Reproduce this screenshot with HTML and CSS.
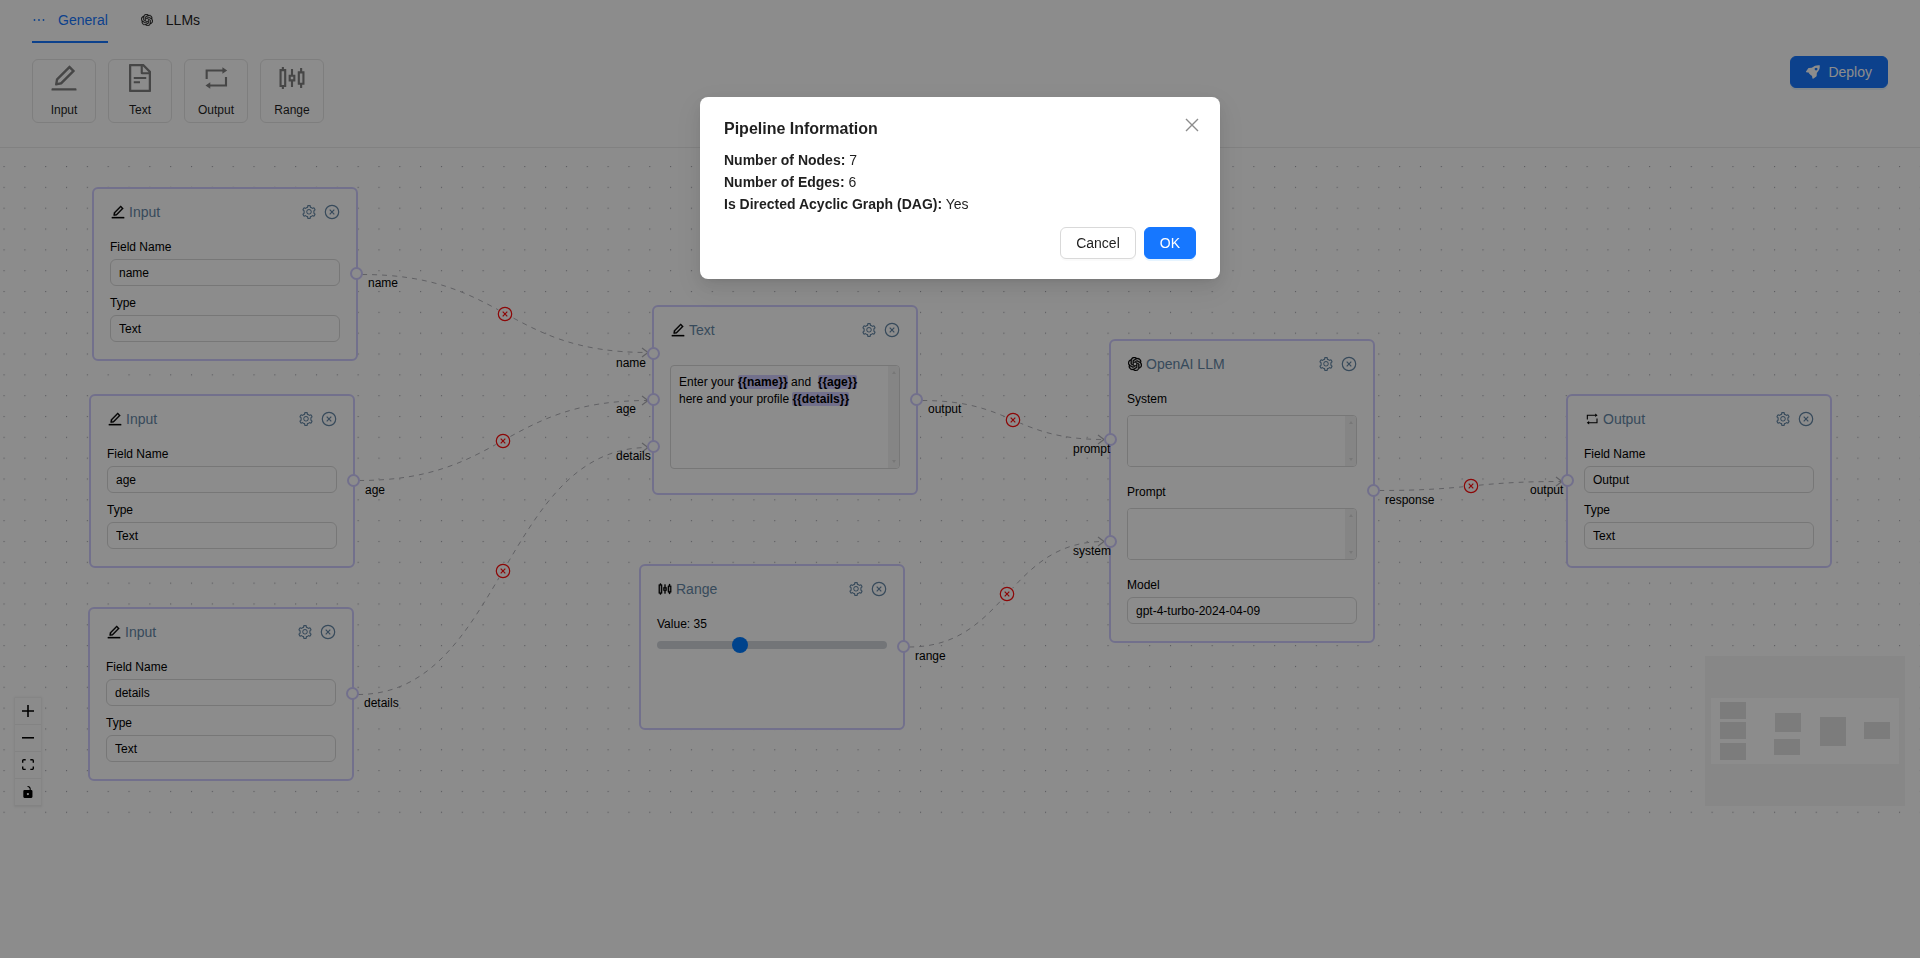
FILE: index.html
```html
<!DOCTYPE html>
<html lang="en">
<head>
<meta charset="utf-8">
<title>Pipeline editor</title>
<link rel="stylesheet" href="styles.css">
</head>
<body>
<svg class="sprite" aria-hidden="true">
  <symbol id="i-edit" viewBox="0 0 1024 1024"><path d="M257.700 752c2 0 4-.2 6-.5L431.900 722c2-.4 3.900-1.300 5.300-2.800l423.900-423.900a9.960 9.960 0 000-14.100L694.900 114.900c-1.900-1.900-4.400-2.900-7.100-2.900s-5.200 1-7.100 2.900L256.800 538.800c-1.500 1.500-2.400 3.300-2.800 5.300l-29.500 168.200a33.500 33.500 0 009.400 29.800c6.600 6.400 14.900 9.900 23.800 9.900zm67.400-174.400L687.800 215l73.300 73.300-362.700 362.600-88.900 15.700 15.600-89zM880 836H144c-17.700 0-32 14.300-32 32v36c0 4.400 3.600 8 8 8h784c4.400 0 8-3.600 8-8v-36c0-17.700-14.300-32-32-32z"/></symbol>
  <symbol id="i-file" viewBox="0 0 1024 1024"><path d="M854.600 288.600L639.400 73.400c-6-6-14.100-9.400-22.600-9.400H192c-17.700 0-32 14.300-32 32v832c0 17.700 14.300 32 32 32h640c17.700 0 32-14.300 32-32V311.300c0-8.500-3.400-16.700-9.400-22.700zM790.200 326H602V137.800L790.200 326zm1.800 562H232V136h302v216a42 42 0 0042 42h216v494zM504 618H320c-4.400 0-8 3.600-8 8v48c0 4.400 3.600 8 8 8h184c4.400 0 8-3.600 8-8v-48c0-4.400-3.600-8-8-8zM312 490v48c0 4.400 3.600 8 8 8h384c4.400 0 8-3.600 8-8v-48c0-4.400-3.600-8-8-8H320c-4.400 0-8 3.600-8 8z"/></symbol>
  <symbol id="i-loop" viewBox="0 0 24 24"><path d="M5 12.700V6.400h12.300M19.500 11.300v6.300H7.200" fill="none" stroke="currentColor" stroke-width="1.600"/><path d="M16.800 3.900l3.600 2.500-3.600 2.500zM7.700 15.100l-3.600 2.500 3.600 2.500z" stroke="none"/></symbol>
  <symbol id="i-sliders" viewBox="0 0 1024 1024"><path d="M320 224h-66v-56c0-4.400-3.600-8-8-8h-52c-4.400 0-8 3.600-8 8v56h-66c-4.400 0-8 3.600-8 8v560c0 4.400 3.600 8 8 8h66v56c0 4.400 3.600 8 8 8h52c4.400 0 8-3.600 8-8v-56h66c4.400 0 8-3.600 8-8V232c0-4.400-3.600-8-8-8zm-60 508h-80V292h80v440zm644-436h-66v-96c0-4.400-3.600-8-8-8h-52c-4.400 0-8 3.600-8 8v96h-66c-4.400 0-8 3.600-8 8v416c0 4.400 3.600 8 8 8h66v96c0 4.400 3.600 8 8 8h52c4.400 0 8-3.600 8-8v-96h66c4.400 0 8-3.600 8-8V304c0-4.400-3.600-8-8-8zm-60 364h-80V364h80v296zM612 404h-66V232c0-4.400-3.600-8-8-8h-52c-4.400 0-8 3.600-8 8v172h-66c-4.400 0-8 3.600-8 8v200c0 4.400 3.600 8 8 8h66v172c0 4.400 3.600 8 8 8h52c4.400 0 8-3.600 8-8V620h66c4.400 0 8-3.600 8-8V412c0-4.400-3.600-8-8-8zm-60 145a3 3 0 01-3 3h-74a3 3 0 01-3-3v-74a3 3 0 013-3h74a3 3 0 013 3v74z"/></symbol>
  <symbol id="i-openai" viewBox="0 0 24 24"><path d="M22.2819 9.8211a5.9847 5.9847 0 0 0-.5157-4.9108 6.0462 6.0462 0 0 0-6.5098-2.9A6.0651 6.0651 0 0 0 4.9807 4.1818a5.9847 5.9847 0 0 0-3.9977 2.9 6.0462 6.0462 0 0 0 .7427 7.0966 5.98 5.98 0 0 0 .511 4.9107 6.051 6.051 0 0 0 6.5146 2.9001A5.9847 5.9847 0 0 0 13.2599 24a6.0557 6.0557 0 0 0 5.7718-4.2058 5.9894 5.9894 0 0 0 3.9977-2.9001 6.0557 6.0557 0 0 0-.7475-7.0729zm-9.022 12.6081a4.4755 4.4755 0 0 1-2.8764-1.0408l.1419-.0804 4.7783-2.7582a.7948.7948 0 0 0 .3927-.6813v-6.7369l2.02 1.1686a.071.071 0 0 1 .038.052v5.5826a4.504 4.504 0 0 1-4.4945 4.4944zm-9.6607-4.1254a4.4708 4.4708 0 0 1-.5346-3.0137l.142.0852 4.783 2.7582a.7712.7712 0 0 0 .7806 0l5.8428-3.3685v2.3324a.0804.0804 0 0 1-.0332.0615L9.74 19.9502a4.4992 4.4992 0 0 1-6.1408-1.6464zM2.3408 7.8956a4.485 4.485 0 0 1 2.3655-1.9728V11.6a.7664.7664 0 0 0 .3879.6765l5.8144 3.3543-2.0201 1.1685a.0757.0757 0 0 1-.071 0l-4.8303-2.7865A4.504 4.504 0 0 1 2.3408 7.872zm16.5963 3.8558L13.1038 8.364 15.1192 7.2a.0757.0757 0 0 1 .071 0l4.8303 2.7913a4.4944 4.4944 0 0 1-.6765 8.1042v-5.6772a.79.79 0 0 0-.407-.667zm2.0107-3.0231l-.142-.0852-4.7735-2.7818a.7759.7759 0 0 0-.7854 0L9.409 9.2297V6.8974a.0662.0662 0 0 1 .0284-.0615l4.8303-2.7866a4.4992 4.4992 0 0 1 6.6802 4.66zM8.3065 12.863l-2.02-1.1638a.0804.0804 0 0 1-.038-.0567V6.0742a4.4992 4.4992 0 0 1 7.3757-3.4537l-.142.0805L8.704 5.459a.7948.7948 0 0 0-.3927.6813zm1.0976-2.3654l2.602-1.4998 2.6069 1.4998v2.9994l-2.5974 1.4997-2.6067-1.4997Z"/></symbol>
  <symbol id="i-gear" viewBox="0 0 1024 1024"><path d="M924.800 625.700l-65.500-56c3.100-19 4.700-38.400 4.700-57.800s-1.600-38.800-4.700-57.800l65.500-56a32.030 32.030 0 009.300-35.200l-.9-2.600a443.740 443.740 0 00-79.700-137.900l-1.800-2.100a32.120 32.120 0 00-35.100-9.500l-81.300 28.900c-30-24.600-63.500-44-99.700-57.600l-15.700-85a32.050 32.050 0 00-25.800-25.700l-2.700-.5c-52.100-9.400-106.900-9.400-159 0l-2.700.5a32.050 32.050 0 00-25.800 25.700l-15.800 85.400a351.860 351.860 0 00-99 57.400l-81.900-29.100a32 32 0 00-35.100 9.500l-1.800 2.100a446.020 446.020 0 00-79.700 137.900l-.9 2.600c-4.500 12.500-.8 26.500 9.300 35.200l66.300 56.600c-3.100 18.800-4.600 38-4.600 57.100 0 19.200 1.500 38.400 4.600 57.100L99 625.500a32.030 32.030 0 00-9.300 35.200l.9 2.600c18.100 50.400 44.900 96.900 79.700 137.900l1.800 2.100a32.120 32.120 0 0035.100 9.500l81.900-29.100c29.800 24.500 63.100 43.900 99 57.400l15.800 85.400a32.050 32.050 0 0025.800 25.700l2.700.5a449.400 449.400 0 00159 0l2.700-.5a32.050 32.050 0 0025.800-25.700l15.700-85a350 350 0 0099.700-57.600l81.300 28.900a32 32 0 0035.100-9.500l1.800-2.100c34.800-41.100 61.600-87.500 79.700-137.900l.9-2.600c4.500-12.300.8-26.300-9.300-35zM788.300 465.900c2.500 15.100 3.800 30.600 3.800 46.100s-1.300 31-3.800 46.100l-6.600 40.100 74.700 63.900a370.030 370.030 0 01-42.600 73.600L721 702.800l-31.400 25.800c-23.900 19.600-50.500 35-79.300 45.800l-38.100 14.300-17.900 97a377.500 377.500 0 01-85 0l-17.900-97.200-37.800-14.500c-28.500-10.800-55-26.200-78.700-45.700l-31.400-25.900-93.400 33.200c-17-22.900-31.200-47.600-42.600-73.600l75.500-64.500-6.500-40c-2.400-14.900-3.700-30.300-3.700-45.500 0-15.300 1.200-30.600 3.700-45.500l6.500-40-75.500-64.500c11.300-26.100 25.600-50.700 42.600-73.600l93.400 33.200 31.400-25.900c23.700-19.500 50.200-34.900 78.700-45.700l37.900-14.300 17.900-97.200c28.100-3.200 56.800-3.200 85 0l17.900 97 38.100 14.300c28.700 10.800 55.400 26.200 79.300 45.800l31.400 25.800 92.800-32.900c17 22.900 31.200 47.600 42.600 73.600L781.800 426l6.500 39.900zM512 326c-97.200 0-176 78.800-176 176s78.800 176 176 176 176-78.800 176-176-78.800-176-176-176zm79.200 255.200A111.600 111.600 0 01512 614c-29.900 0-58-11.700-79.200-32.800A111.600 111.600 0 01400 502c0-29.900 11.700-58 32.800-79.200C454 401.600 482.100 390 512 390c29.900 0 58 11.600 79.200 32.800A111.600 111.600 0 01624 502c0 29.900-11.700 58-32.800 79.200z"/></symbol>
  <symbol id="i-remove" viewBox="0 0 16 16"><path d="M8 1.300a6.700 6.700 0 1 1 0 13.400a6.700 6.700 0 1 1 0-13.400zM5.700 5.700l4.600 4.600M10.300 5.700l-4.600 4.600" fill="none" stroke="currentColor" stroke-width="1.200"/></symbol>
  <symbol id="i-dots" viewBox="0 0 14 14"><circle cx="2.500" cy="7" r="0.900"/><circle cx="7" cy="7" r="0.900"/><circle cx="11.500" cy="7" r="0.900"/></symbol>
  <symbol id="i-rocket" viewBox="0 0 16 16"><path fill-rule="evenodd" d="M15.700.4c.3 3.400-.5 5.800-3.300 8.600l-.2 3.300c0 .3-.2.500-.4.700l-3.600 2.600c-.4.200-.8 0-.9-.4l-.5-3.300-.6.500-3-3 .5-.6-3.300-.5c-.4-.1-.6-.5-.4-.9l2.600-3.600c.2-.2.400-.4.700-.4l3.300-.2C9.700.8 12.400 0 15.700.4zM11.500 3a1.600 1.600 0 1 0 .01 0z"/></symbol>
  <symbol id="i-close" viewBox="0 0 16 16"><path d="M2 2l12 12M14 2L2 14" fill="none" stroke="currentColor" stroke-width="1.400"/></symbol>
</svg>

<header class="toolbar">
  <nav class="tabs" role="tablist">
    <button class="tab tab-active" role="tab" aria-selected="true"><svg class="icon-14"><use href="#i-dots"/></svg>General</button>
    <button class="tab" role="tab" aria-selected="false"><svg class="icon-14 icon-inset"><use href="#i-openai"/></svg>LLMs</button>
  </nav>
  <div class="tools">
    <div class="palette">
      <button class="tool"><svg class="icon-32"><use href="#i-edit"/></svg><span>Input</span></button>
      <button class="tool"><svg class="icon-32"><use href="#i-file"/></svg><span>Text</span></button>
      <button class="tool"><svg class="icon-32"><use href="#i-loop"/></svg><span>Output</span></button>
      <button class="tool"><svg class="icon-32"><use href="#i-sliders"/></svg><span>Range</span></button>
    </div>
    <button class="btn btn-primary btn-deploy"><svg class="icon-14"><use href="#i-rocket"/></svg>Deploy</button>
  </div>
</header>

<main class="canvas">
  <svg class="layer">
    <defs>
      <pattern id="grid" x="3.500" y="18" width="20.830" height="20.830" patternUnits="userSpaceOnUse"><circle cx="0.600" cy="0.600" r="0.600" fill="#91919a"/></pattern>
      <marker id="arrow" viewBox="-10 -10 20 20" markerWidth="20" markerHeight="20" refX="0" refY="0" orient="auto" markerUnits="userSpaceOnUse"><polyline points="-6,-4.500 0,0 -6,4.500" fill="none" stroke="#b1b1b7" stroke-width="1.200"/></marker>
    </defs>
    <rect width="100%" height="100%" fill="url(#grid)"/>
    <g class="edges">
      <path d="M362 126.500C505 126.500 505 204.500 648 204.500"/>
      <path d="M359 332.500C503 332.500 503 252.500 648 252.500"/>
      <path d="M358 546.500C503 546.500 503 299.500 648 299.500"/>
      <path d="M922 252.500C1013 252.500 1013 291.500 1104 291.500"/>
      <path d="M909 499C1007 499 1007 393.500 1104 393.500"/>
      <path d="M1379 342.500C1471 342.500 1471 333.500 1562 333.500"/>
    </g>
  </svg>

  <button class="cut cut-1" aria-label="Remove edge"><svg class="icon-16"><use href="#i-remove"/></svg></button>
  <button class="cut cut-2" aria-label="Remove edge"><svg class="icon-16"><use href="#i-remove"/></svg></button>
  <button class="cut cut-3" aria-label="Remove edge"><svg class="icon-16"><use href="#i-remove"/></svg></button>
  <button class="cut cut-4" aria-label="Remove edge"><svg class="icon-16"><use href="#i-remove"/></svg></button>
  <button class="cut cut-5" aria-label="Remove edge"><svg class="icon-16"><use href="#i-remove"/></svg></button>
  <button class="cut cut-6" aria-label="Remove edge"><svg class="icon-16"><use href="#i-remove"/></svg></button>

  <section class="node node-name">
    <div class="node-head"><svg class="icon-16 node-icon"><use href="#i-edit"/></svg><h2>Input</h2>
      <button aria-label="Settings"><svg class="icon-16"><use href="#i-gear"/></svg></button><button aria-label="Delete"><svg class="icon-16"><use href="#i-remove"/></svg></button></div>
    <div class="field"><label for="n1">Field Name</label><input id="n1" type="text" value="name"></div>
    <div class="field"><label for="t1">Type</label><select id="t1"><option>Text</option></select></div>
    <div class="handle out at-half"><span>name</span></div>
  </section>

  <section class="node node-age">
    <div class="node-head"><svg class="icon-16 node-icon"><use href="#i-edit"/></svg><h2>Input</h2>
      <button aria-label="Settings"><svg class="icon-16"><use href="#i-gear"/></svg></button><button aria-label="Delete"><svg class="icon-16"><use href="#i-remove"/></svg></button></div>
    <div class="field"><label for="n2">Field Name</label><input id="n2" type="text" value="age"></div>
    <div class="field"><label for="t2">Type</label><select id="t2"><option>Text</option></select></div>
    <div class="handle out at-half"><span>age</span></div>
  </section>

  <section class="node node-details">
    <div class="node-head"><svg class="icon-16 node-icon"><use href="#i-edit"/></svg><h2>Input</h2>
      <button aria-label="Settings"><svg class="icon-16"><use href="#i-gear"/></svg></button><button aria-label="Delete"><svg class="icon-16"><use href="#i-remove"/></svg></button></div>
    <div class="field"><label for="n3">Field Name</label><input id="n3" type="text" value="details"></div>
    <div class="field"><label for="t3">Type</label><select id="t3"><option>Text</option></select></div>
    <div class="handle out at-half"><span>details</span></div>
  </section>

  <section class="node node-text">
    <div class="node-head"><svg class="icon-16 node-icon"><use href="#i-edit"/></svg><h2>Text</h2>
      <button aria-label="Settings"><svg class="icon-16"><use href="#i-gear"/></svg></button><button aria-label="Delete"><svg class="icon-16"><use href="#i-remove"/></svg></button></div>
    <div class="scrollbox scrollbox-tall">
      <div class="prose" contenteditable="true" role="textbox" aria-label="Text">Enter your <mark>{{name}}</mark> and&nbsp; <mark>{{age}}</mark><br>here and your profile <mark>{{details}}</mark></div>
      <div class="track"><i class="up"></i><i class="down"></i></div>
    </div>
    <div class="handle in at-quarter"><span>name</span></div>
    <div class="handle in at-half"><span>age</span></div>
    <div class="handle in at-three-quarters"><span>details</span></div>
    <div class="handle out at-half"><span>output</span></div>
  </section>

  <section class="node node-range">
    <div class="node-head"><svg class="icon-16 node-icon"><use href="#i-sliders"/></svg><h2>Range</h2>
      <button aria-label="Settings"><svg class="icon-16"><use href="#i-gear"/></svg></button><button aria-label="Delete"><svg class="icon-16"><use href="#i-remove"/></svg></button></div>
    <div class="field"><label for="r1">Value: 35</label><input id="r1" type="range" min="0" max="100" value="35"></div>
    <div class="handle out at-half"><span>range</span></div>
  </section>

  <section class="node node-llm">
    <div class="node-head"><svg class="icon-14 node-icon node-icon-inset"><use href="#i-openai"/></svg><h2>OpenAI LLM</h2>
      <button aria-label="Settings"><svg class="icon-16"><use href="#i-gear"/></svg></button><button aria-label="Delete"><svg class="icon-16"><use href="#i-remove"/></svg></button></div>
    <div class="field field-area"><label for="a1">System</label><div class="scrollbox"><textarea id="a1"></textarea><div class="track"><i class="up"></i><i class="down"></i></div></div></div>
    <div class="field field-area"><label for="a2">Prompt</label><div class="scrollbox"><textarea id="a2"></textarea><div class="track"><i class="up"></i><i class="down"></i></div></div></div>
    <div class="field"><label for="m1">Model</label><select id="m1"><option>gpt-4-turbo-2024-04-09</option></select></div>
    <div class="handle in at-third"><span>prompt</span></div>
    <div class="handle in at-two-thirds"><span>system</span></div>
    <div class="handle out at-half"><span>response</span></div>
  </section>

  <section class="node node-output">
    <div class="node-head"><svg class="icon-16 node-icon node-icon-plain"><use href="#i-loop"/></svg><h2>Output</h2>
      <button aria-label="Settings"><svg class="icon-16"><use href="#i-gear"/></svg></button><button aria-label="Delete"><svg class="icon-16"><use href="#i-remove"/></svg></button></div>
    <div class="field"><label for="n4">Field Name</label><input id="n4" type="text" value="Output"></div>
    <div class="field"><label for="t4">Type</label><select id="t4"><option>Text</option></select></div>
    <div class="handle in at-half"><span>output</span></div>
  </section>

  <div class="controls">
    <button aria-label="Zoom in"><svg viewBox="0 0 32 32"><path d="M32 18.133H18.133V32h-4.266V18.133H0v-4.266h13.867V0h4.266v13.867H32z"/></svg></button>
    <button aria-label="Zoom out"><svg viewBox="0 0 32 5"><path d="M0 0h32v4.200H0z"/></svg></button>
    <button aria-label="Fit view"><svg viewBox="0 0 32 30"><path d="M3.692 4.630c0-.53.4-.938.939-.938h5.215V0H4.708C2.130 0 0 2.054 0 4.630v5.216h3.692V4.631zM27.354 0h-5.200v3.692h5.170c.53 0 .984.4.984.939v5.215H32V4.631A4.624 4.624 0 0027.354 0zm.954 24.830c0 .532-.4.940-.939.940h-5.215v3.768h5.215c2.577 0 4.631-2.130 4.631-4.707v-5.139h-3.692v5.139zm-23.677.940c-.531 0-.939-.4-.939-.940v-5.138H0v5.139c0 2.577 2.130 4.707 4.708 4.707h5.138V25.770H4.631z"/></svg></button>
    <button aria-label="Toggle interactivity"><svg viewBox="0 0 25 32"><path d="M21.333 10.667H19.810V7.619C19.810 3.429 16.380 0 12.190 0c-4.114 1.828-1.370 2.133.305 2.438 1.676.305 4.420 2.590 4.420 5.181v3.048H3.047A3.056 3.056 0 000 13.714v15.238A3.056 3.056 0 003.048 32h18.285a3.056 3.056 0 003.048-3.048V13.714a3.056 3.056 0 00-3.048-3.047zM12.190 24.533a3.056 3.056 0 01-3.047-3.047 3.056 3.056 0 013.047-3.048 3.056 3.056 0 013.048 3.048 3.056 3.056 0 01-3.048 3.047z"/></svg></button>
  </div>

  <svg class="minimap" viewBox="0 0 200 150" role="img" aria-label="Mini map">
    <rect width="200" height="150" fill="#f6f6f6"/>
    <rect x="6" y="42" width="188" height="66" fill="#fff"/>
    <g fill="#e2e2e2">
      <rect x="15" y="46" width="26" height="17"/><rect x="15" y="66" width="26" height="17"/><rect x="15" y="87" width="26" height="17"/>
      <rect x="70" y="57" width="26" height="19"/><rect x="69" y="83" width="26" height="16"/>
      <rect x="115" y="61" width="26" height="29"/><rect x="159" y="66" width="26" height="17"/>
    </g>
  </svg>
</main>

<div class="backdrop">
  <div class="modal" role="dialog" aria-modal="true" aria-labelledby="modal-title">
    <div class="modal-head">
      <h1 id="modal-title">Pipeline Information</h1>
      <button class="modal-close" aria-label="Close"><svg class="icon-16"><use href="#i-close"/></svg></button>
    </div>
    <div class="modal-body">
      <p><strong>Number of Nodes:</strong> 7</p>
      <p><strong>Number of Edges:</strong> 6</p>
      <p><strong>Is Directed Acyclic Graph (DAG):</strong> Yes</p>
    </div>
    <div class="modal-foot">
      <button class="btn">Cancel</button>
      <button class="btn btn-primary">OK</button>
    </div>
  </div>
</div>
</body>
</html>
```
FILE: styles.css
```css
* { box-sizing: border-box; }

body {
  margin: 0;
  min-height: 100vh;
  background: #fff;
  color: #1f1f1f;
  font: 14px/22px "Liberation Sans", Arial, sans-serif;
}

h1, h2, p { margin: 0; }

button {
  padding: 0;
  border: 0;
  background: none;
  color: inherit;
  font: inherit;
  cursor: pointer;
}

svg { display: block; fill: currentColor; }
.sprite { position: absolute; width: 0; height: 0; }
.icon-14 { width: 14px; height: 14px; }
.icon-16 { width: 16px; height: 16px; }
.icon-32 { width: 32px; height: 32px; }
.icon-inset { padding: 1px; stroke: currentColor; stroke-width: 0.5; }

/* Toolbar */
.toolbar {
  display: flex;
  flex-direction: column;
  gap: 16px;
  padding: 0 32px 24px;
  border-bottom: 1px solid #ebebeb;
}

.tabs { display: flex; gap: 32px; }

.tab {
  display: flex;
  align-items: center;
  gap: 12px;
  padding: 9px 0 10px;
  border-bottom: 2px solid transparent;
}

.tab-active { color: #1677ff; border-bottom-color: #1677ff; }

.tools {
  display: flex;
  align-items: flex-start;
  justify-content: space-between;
}

.palette { display: flex; gap: 12px; }

.tool {
  display: flex;
  flex-direction: column;
  align-items: center;
  gap: 7px;
  width: 64px;
  height: 64px;
  padding-top: 2px;
  border: 1px solid #e6e6e6;
  border-radius: 6px;
  font-size: 12px;
  line-height: 18px;
}

.tool svg { color: #808080; }

.btn {
  display: flex;
  align-items: center;
  gap: 8px;
  height: 32px;
  padding: 0 15px;
  border: 1px solid #d9d9d9;
  border-radius: 6px;
  background: #fff;
  box-shadow: 0 2px 0 rgba(0, 0, 0, 0.02);
}

.btn-primary {
  border-color: #1677ff;
  background: #1677ff;
  color: #fff;
  box-shadow: 0 2px 0 rgba(5, 145, 255, 0.1);
}

.btn-deploy { margin-top: -3px; }

/* Canvas */
.canvas {
  position: relative;
  height: 673px;
  overflow: hidden;
  color: #000;
  font-size: 12px;
  line-height: 18px;
}

.layer { position: absolute; inset: 0; width: 100%; height: 100%; }

.edges path {
  fill: none;
  stroke: #b1b1b7;
  stroke-width: 1;
  stroke-dasharray: 5;
  marker-end: url(#arrow);
}

.cut {
  position: absolute;
  border-radius: 50%;
  background: #fff;
  color: #ff0d0d;
}

.cut-1 { left: 497px; top: 158px; }
.cut-2 { left: 495px; top: 285px; }
.cut-3 { left: 495px; top: 415px; }
.cut-4 { left: 1005px; top: 264px; }
.cut-5 { left: 999px; top: 438px; }
.cut-6 { left: 1463px; top: 330px; }

.node {
  position: absolute;
  display: flex;
  flex-direction: column;
  gap: 8px;
  width: 266px;
  padding: 12px 16px 17px;
  border: 2px solid #d0ccff;
  border-radius: 6px;
  background: #fff;
}

.node-name { left: 92px; top: 39px; }
.node-age { left: 89px; top: 246px; }
.node-details { left: 88px; top: 459px; }
.node-text { left: 652px; top: 157px; padding-bottom: 24px; }
.node-range { left: 639px; top: 416px; height: 166px; }
.node-llm { left: 1109px; top: 191px; }
.node-output { left: 1566px; top: 246px; }

.node-head {
  display: flex;
  align-items: center;
  gap: 7px;
  height: 22px;
  margin-bottom: 7px;
  color: #6587a6;
}

.node-head h2 {
  flex: 1;
  margin-left: -4px;
  font-size: 14px;
  font-weight: 400;
  line-height: 22px;
}

.node-icon { color: #000; stroke: #000; stroke-width: 20; }
.node-icon-inset { margin: 0 1px; stroke-width: 0.7; }
.node-icon-plain { stroke: none; }

.field { display: flex; flex-direction: column; gap: 3px; }
.field-area { gap: 7px; margin-bottom: 8px; }

.field input[type="text"],
.field select {
  width: 100%;
  height: 27px;
  padding: 0 8px;
  border: 1px solid #d9d9d9;
  border-radius: 6px;
  background: #fff;
  color: #000;
  font: inherit;
  appearance: none;
}

.field input[type="range"] {
  width: 100%;
  height: 8px;
  margin: 5px 0;
  border-radius: 4px;
  background: #d1d5db;
  appearance: none;
}

.field input[type="range"]::-webkit-slider-thumb {
  width: 16px;
  height: 16px;
  border-radius: 50%;
  background: #007bff;
  appearance: none;
}

.scrollbox {
  display: flex;
  height: 52px;
  border: 1px solid #d9d9d9;
  border-radius: 4px;
  overflow: hidden;
}

.scrollbox-tall { height: 104px; margin-top: 9px; }

.scrollbox textarea {
  flex: 1;
  min-width: 0;
  padding: 7px 8px;
  border: 0;
  background: #fff;
  font: inherit;
  resize: none;
  outline: 0;
  overflow: hidden;
}

.prose {
  flex: 1;
  padding: 8px;
  line-height: 17px;
  white-space: nowrap;
}

.prose mark {
  border-radius: 2px;
  background: #d0ccff;
  color: #000;
  font-weight: 700;
}

.track {
  display: flex;
  flex-direction: column;
  align-items: center;
  justify-content: space-between;
  width: 11px;
  padding: 5px 0;
  background: #f3f3f3;
}

.track i { border: 2px solid transparent; }
.track .up { border-top: 0; border-bottom: 3px solid #d9d9d9; }
.track .down { border-bottom: 0; border-top: 3px solid #d9d9d9; }

.handle {
  position: absolute;
  width: 13px;
  height: 13px;
  margin-top: -7px;
  border: 2px solid #d0ccff;
  border-radius: 50%;
  background: #fff;
}

.handle span { position: absolute; top: 5px; white-space: nowrap; }
.in { left: -7px; }
.in span { left: -33px; }
.out { right: -7px; }
.out span { left: 16px; }
.at-quarter { top: 25%; }
.at-third { top: 33%; }
.at-half { top: 50%; }
.at-two-thirds { top: 67%; }
.at-three-quarters { top: 75%; }

.controls {
  position: absolute;
  left: 15px;
  bottom: 15px;
  width: 26px;
  box-shadow: 0 0 2px 1px rgba(0, 0, 0, 0.08);
}

.controls button {
  display: flex;
  align-items: center;
  justify-content: center;
  width: 100%;
  height: 27px;
  border-bottom: 1px solid #eee;
  background: #fefefe;
}

.controls svg { width: 12px; max-height: 12px; }

.minimap {
  position: absolute;
  right: 15px;
  bottom: 15px;
  width: 200px;
  height: 150px;
}

/* Dialog */
.backdrop {
  position: fixed;
  inset: 0;
  display: flex;
  align-items: flex-start;
  justify-content: center;
  padding-top: 97px;
  background: rgba(0, 0, 0, 0.45);
}

.modal {
  width: 520px;
  padding: 20px 24px;
  border-radius: 8px;
  background: #fff;
  box-shadow: 0 6px 16px rgba(0, 0, 0, 0.08), 0 3px 6px -4px rgba(0, 0, 0, 0.12), 0 9px 28px 8px rgba(0, 0, 0, 0.05);
}

.modal-head {
  display: flex;
  align-items: flex-start;
  justify-content: space-between;
  margin-bottom: 8px;
}

.modal-head h1 { font-size: 16px; font-weight: 700; line-height: 24px; }
.modal-close { margin-right: -4px; color: #8c8c8c; }

.modal-foot {
  display: flex;
  justify-content: flex-end;
  gap: 8px;
  margin-top: 12px;
}
```
